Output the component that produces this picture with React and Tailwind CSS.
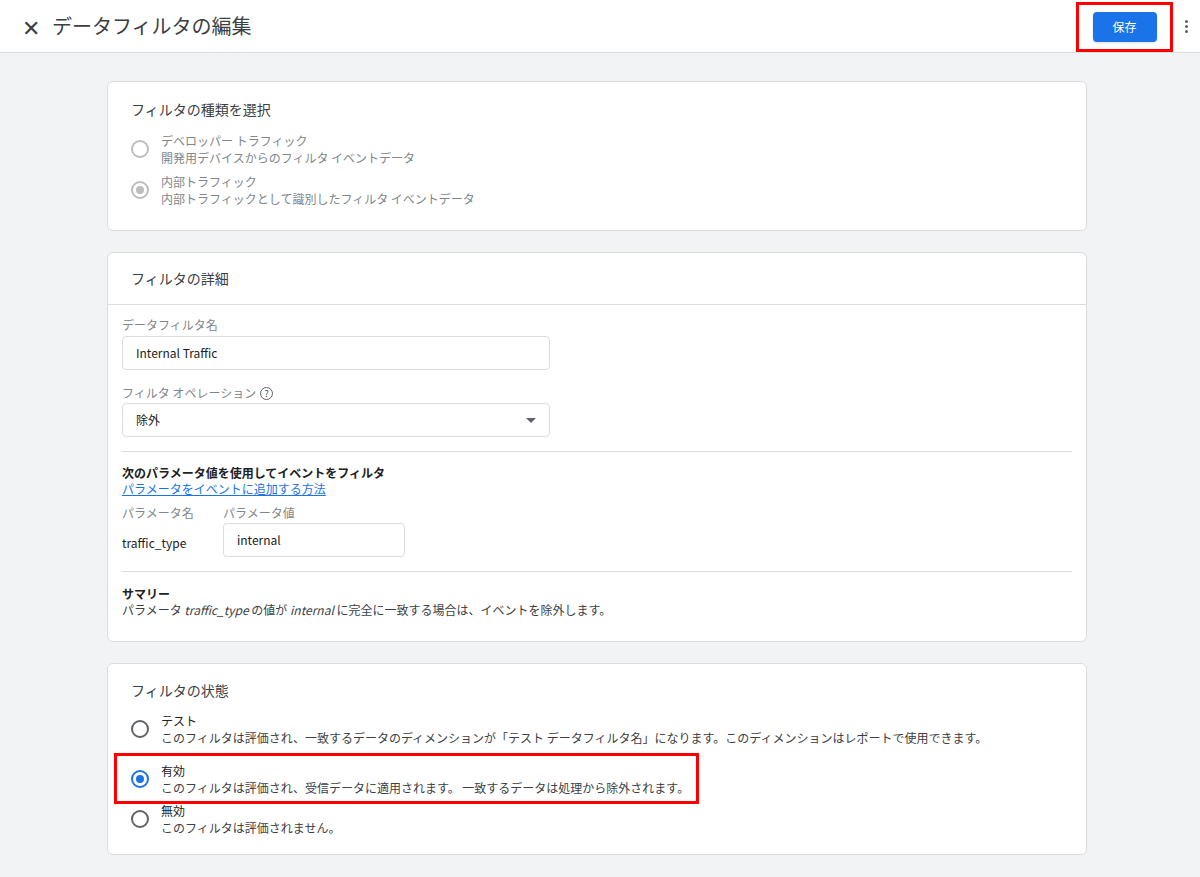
export default function App() {
  const f = { fontFamily: '"Noto Sans CJK JP", Roboto, sans-serif' };
  const Radio = ({ on, dis }) => (
    <span className={`w-[18px] h-[18px] rounded-full border-2 flex items-center justify-center shrink-0 ${dis ? 'border-[#bdbdbd]' : on ? 'border-[#1a73e8]' : 'border-[#5f6368]'}`}>
      {on && <span className={`w-[8px] h-[8px] rounded-full ${dis ? 'bg-[#bdbdbd]' : 'bg-[#1a73e8]'}`} />}
    </span>
  );
  return (
    <div style={f} className="w-[1200px] h-[877px] bg-[#f1f3f4] text-[#202124] overflow-hidden">
      <div className="h-[53px] bg-white border-b border-[#dadce0] flex items-center pl-[22px] pr-[8px]">
        <span className="text-[22px] text-[#3c4043] leading-none mr-[12px]">✕</span>
        <span className="text-[20px] text-[#3c4043]">データフィルタの編集</span>
        <div className="ml-auto border-[3px] border-[#ff0000] w-[97px] h-[50px] mt-[2px] flex items-center justify-center">
          <div className="bg-[#1a73e8] text-white text-[12px] rounded w-[64px] h-[30px] flex items-center justify-center shadow">保存</div>
        </div>
        <div className="flex flex-col gap-[2px] ml-[12px] mr-[4px]">
          <span className="w-[3px] h-[3px] rounded-full bg-[#5f6368]" />
          <span className="w-[3px] h-[3px] rounded-full bg-[#5f6368]" />
          <span className="w-[3px] h-[3px] rounded-full bg-[#5f6368]" />
        </div>
      </div>
      <div className="w-[980px] ml-[107px] pt-[28px] flex flex-col gap-[21px]">
        <div className="bg-white border border-[#dadce0] rounded-md h-[150px] px-[23px] pt-[17px]">
          <div className="text-[14px] text-[#3c4043] mb-[12px]">フィルタの種類を選択</div>
          <div className="flex items-center gap-[12px] text-[12px] text-[#80868b] leading-[17px] mb-[7px]">
            <Radio dis />
            <div><div>デベロッパー トラフィック</div><div>開発用デバイスからのフィルタ イベントデータ</div></div>
          </div>
          <div className="flex items-center gap-[12px] text-[12px] text-[#80868b] leading-[17px]">
            <Radio on dis />
            <div><div>内部トラフィック</div><div>内部トラフィックとして識別したフィルタ イベントデータ</div></div>
          </div>
        </div>
        <div className="bg-white border border-[#dadce0] rounded-md h-[390px]">
          <div className="h-[52px] border-b border-[#dadce0] flex items-center px-[23px] text-[14px] text-[#3c4043]">フィルタの詳細</div>
          <div className="px-[14px] pt-[12px] text-[12px] leading-[16px]">
            <div className="text-[#80868b]">データフィルタ名</div>
            <div className="mt-[3px] w-[428px] h-[34px] border border-[#dadce0] rounded flex items-center px-[13px]">Internal Traffic</div>
            <div className="mt-[15px] text-[#80868b] flex items-center gap-[4px]">フィルタ オペレーション
              <span className="w-[13px] h-[13px] rounded-full border border-[#5f6368] text-[9px] text-[#3c4043] flex items-center justify-center leading-none">?</span></div>
            <div className="mt-[2px] w-[428px] h-[34px] border border-[#dadce0] rounded flex items-center px-[13px]">除外
              <span className="ml-auto w-0 h-0 border-l-[5px] border-r-[5px] border-t-[5px] border-l-transparent border-r-transparent border-t-[#5f6368]" /></div>
            <div className="mt-[14px] border-t border-[#dadce0] w-[950px]" />
            <div className="mt-[13px] font-bold">次のパラメータ値を使用してイベントをフィルタ</div>
            <div className="text-[#1a73e8] underline">パラメータをイベントに追加する方法</div>
            <div className="flex gap-[14px] mt-[8px] text-[#80868b]"><span className="w-[87px]">パラメータ名</span><span>パラメータ値</span></div>
            <div className="flex items-center mt-[2px]">
              <span className="w-[101px] mt-[5px]">traffic_type</span>
              <div className="w-[182px] h-[34px] border border-[#dadce0] rounded flex items-center px-[13px]">internal</div>
            </div>
            <div className="mt-[14px] border-t border-[#dadce0] w-[950px]" />
            <div className="mt-[14px] font-bold">サマリー</div>
            <div className="text-[#3c4043]">パラメータ <i>traffic_type</i> の値が <i>internal</i> に完全に一致する場合は、イベントを除外します。</div>
          </div>
        </div>
        <div className="bg-white border border-[#dadce0] rounded-md h-[192px] pt-[16px]">
          <div className="text-[14px] text-[#3c4043] px-[23px] mb-[11px]">フィルタの状態</div>
          <div className="flex items-center gap-[12px] text-[12px] leading-[17px] pl-[23px] mb-[7px]">
            <Radio /><div><div>テスト</div><div className="text-[#3c4043]">このフィルタは評価され、一致するデータのディメンションが「テスト データフィルタ名」になります。このディメンションはレポートで使用できます。</div></div>
          </div>
          <div className="ml-[6px] w-[585px] h-[51px] border-[3px] border-[#ff0000] flex items-center gap-[12px] text-[12px] leading-[17px] pl-[14px]">
            <Radio on /><div><div>有効</div><div className="text-[#3c4043]">このフィルタは評価され、受信データに適用されます。 一致するデータは処理から除外されます。</div></div>
          </div>
          <div className="flex items-center gap-[12px] text-[12px] leading-[17px] pl-[23px] mt-[-2px]">
            <Radio /><div><div>無効</div><div className="text-[#3c4043]">このフィルタは評価されません。</div></div>
          </div>
        </div>
      </div>
    </div>
  );
}
